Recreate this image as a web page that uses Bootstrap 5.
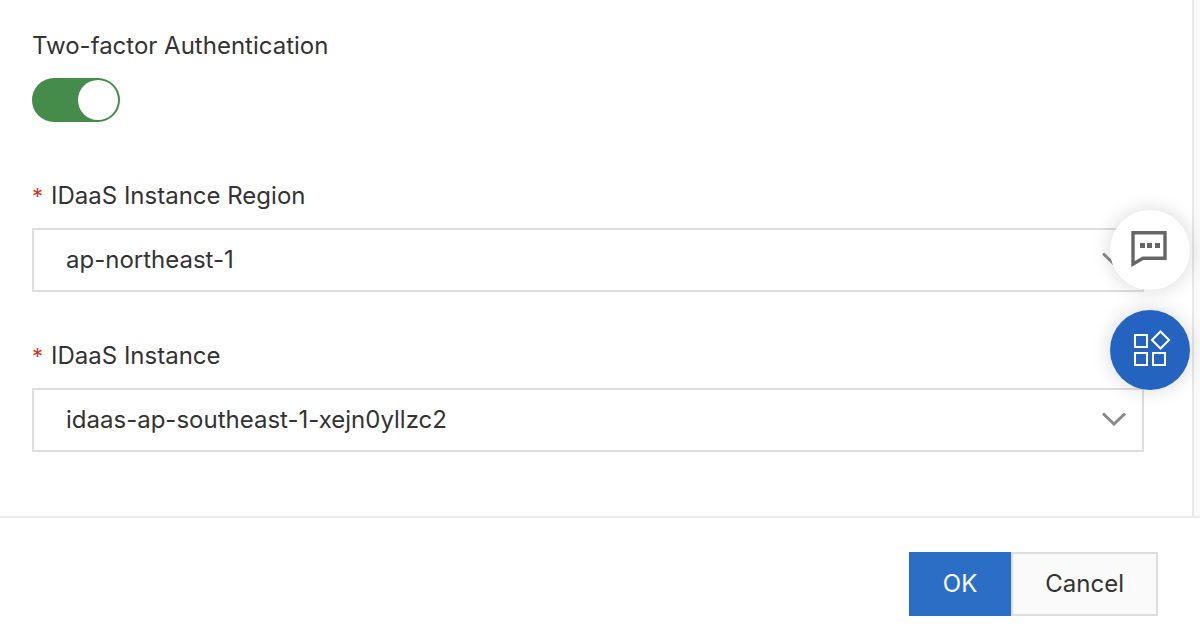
<!DOCTYPE html>
<html lang="en">
<head>
<meta charset="utf-8">
<meta name="viewport" content="width=device-width, initial-scale=1">
<title>Two-factor Authentication</title>
<link href="https://cdn.jsdelivr.net/npm/bootstrap@5.3.0/dist/css/bootstrap.min.css" rel="stylesheet">
<style>
  body { font-family: Inter, "Liberation Sans", sans-serif; font-size: 24px; line-height: 36px; color: #333; }
  .panel-body { padding: 28px 48px 64px 32px; }
  .scroll-track { width: 8px; background: #fafafa; border-left: 2px solid #e8e8e8; }
  .form-label { line-height: 36px; margin-bottom: 14px; }
  .field-group { margin-bottom: 46px; }
  .required-mark { color: #c8372d; margin-right: 8px; font-size: 22px; }
  .form-switch.toggle { padding: 0; min-height: 0; margin: 0 0 56px; line-height: 0; }
  .form-switch.toggle .form-check-input {
    float: none; width: 88px; height: 44px; margin: 0; border: 0; border-radius: 22px;
    background-size: 40px 40px; background-position: left 2px center;
    background-image: url("data:image/svg+xml,%3Csvg xmlns='http://www.w3.org/2000/svg' viewBox='0 0 40 40'%3E%3Ccircle cx='20' cy='20' r='20' fill='white'/%3E%3C/svg%3E");
    background-color: #bbb;
  }
  .form-switch.toggle .form-check-input:checked { background-color: #458b49; background-position: right 2px center; }
  .form-select {
    height: 64px; padding: 0 64px 0 32px; font-size: 24px; line-height: 36px; color: #333;
    border: 2px solid #dedede; border-radius: 0;
    background-image: url("data:image/svg+xml,%3Csvg xmlns='http://www.w3.org/2000/svg' viewBox='0 0 24 14'%3E%3Cpath d='M1 1.5 12 12 23 1.5' fill='none' stroke='%23888' stroke-width='3'/%3E%3C/svg%3E");
    background-size: 24px 14px; background-position: right 16px top 22px;
  }
  .panel-footer { padding: 34px 42px 20px; border-top: 2px solid #ebebeb; }
  .panel-footer .btn { height: 64px; font-size: 24px; line-height: 36px; border-radius: 0; border-width: 2px; padding: 0 32px; }
  .btn-ok { --bs-btn-color: #fff; --bs-btn-bg: #2b6ec6; --bs-btn-border-color: #2b6ec6; --bs-btn-hover-color: #fff; --bs-btn-hover-bg: #2463b5; }
  .btn-dismiss { --bs-btn-color: #333; --bs-btn-bg: #fafafa; --bs-btn-border-color: #dedede; --bs-btn-hover-bg: #f0f0f0; --bs-btn-hover-border-color: #ccc; }
  .float-tools { position: fixed; top: 210px; right: 10px; gap: 20px; z-index: 10; }
  .float-tools .btn { width: 80px; height: 80px; padding: 0; border: 0; box-shadow: 0 0 20px rgba(0,0,0,.16); }
  .tool-chat, .tool-chat:hover { background: #fff; }
  .tool-apps, .tool-apps:hover { background: #2464c0; }
</style>
</head>
<body>
<div class="d-flex flex-column min-vh-100">
  <div class="d-flex flex-grow-1">
    <form class="panel-body flex-grow-1" id="auth-form">
      <label class="form-label d-block" for="two-factor">Two-factor Authentication</label>
      <div class="form-check form-switch toggle">
        <input class="form-check-input" type="checkbox" role="switch" id="two-factor" checked>
      </div>
      <div class="field-group">
        <label class="form-label d-block" for="region"><span class="required-mark">*</span>IDaaS Instance Region</label>
        <select class="form-select" id="region"><option>ap-northeast-1</option></select>
      </div>
      <div>
        <label class="form-label d-block" for="instance"><span class="required-mark">*</span>IDaaS Instance</label>
        <select class="form-select" id="instance"><option>idaas-ap-southeast-1-xejn0yllzc2</option></select>
      </div>
    </form>
    <div class="scroll-track flex-shrink-0"></div>
  </div>
  <footer class="panel-footer d-flex justify-content-end">
    <button type="submit" form="auth-form" class="btn btn-ok">OK</button>
    <button type="button" class="btn btn-dismiss">Cancel</button>
  </footer>
</div>
<div class="float-tools d-flex flex-column">
  <button type="button" class="btn tool-chat rounded-circle d-flex align-items-center justify-content-center" aria-label="Feedback">
    <svg width="80" height="80" viewBox="0 0 80 80" aria-hidden="true">
      <path d="M23 22.700H55V48.300H33L23 54Z" fill="none" stroke="#666" stroke-width="3.4"/>
      <path d="M30 33h5v5h-5zM37 33h5v5h-5zM45 33h5v5h-5z" fill="#666"/>
    </svg>
  </button>
  <button type="button" class="btn tool-apps rounded-circle d-flex align-items-center justify-content-center" aria-label="Applications">
    <svg width="80" height="80" viewBox="0 0 80 80" fill="none" stroke="#fff" stroke-width="2" aria-hidden="true">
      <path d="M25 25H37V37H25ZM25 43H37V55H25ZM43 43H55V55H43ZM50.500 21.500 59 30 50.500 38.500 42 30Z"/>
    </svg>
  </button>
</div>
<script src="https://cdn.jsdelivr.net/npm/bootstrap@5.3.0/dist/js/bootstrap.bundle.min.js"></script>
</body>
</html>
